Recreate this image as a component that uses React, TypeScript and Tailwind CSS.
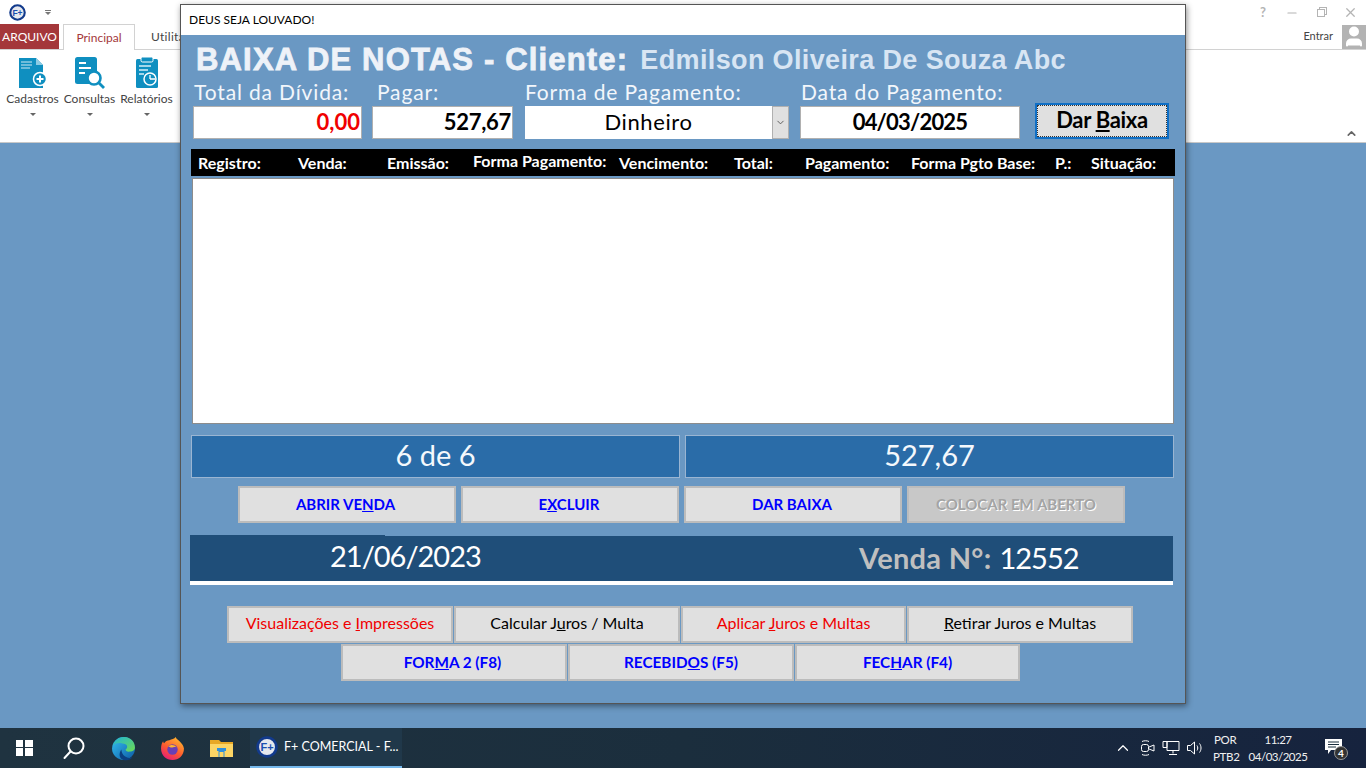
import { ChevronDown, ChevronUp, Minus, X, User } from "lucide-react";
import type { ReactNode } from "react";

const FONT = "font-['Lato','Noto_Sans',sans-serif]";

function FpLogo({ size = 20 }: { size?: number }) {
  return (
    <svg width={size} height={size} viewBox="0 0 24 24">
      <circle cx="12" cy="12" r="10.2" fill="#e6e8ee" stroke="#123a8c" strokeWidth="3" />
      <text x="12" y="16.5" textAnchor="middle" fontSize="12" fontWeight="700" fontFamily="Liberation Sans" fill="#1c4fb0">
        F+
      </text>
    </svg>
  );
}

function CadastrosIcon() {
  return (
    <svg width="30" height="34" viewBox="0 0 30 34">
      <path d="M1 2h17l7 7v23H1z" fill="#0f8fc0" />
      <path d="M18 2l7 7h-7z" fill="#8ccbe3" />
      <path d="M3 6h11M3 9h11M3 12h9" stroke="#cfe9f4" strokeWidth="1.2" />
      <circle cx="22" cy="23" r="6.5" fill="#0f8fc0" stroke="#fff" strokeWidth="1.5" />
      <path d="M22 19.5v7M18.5 23h7" stroke="#fff" strokeWidth="2" />
    </svg>
  );
}

function ConsultasIcon() {
  return (
    <svg width="32" height="33" viewBox="0 0 32 33">
      <rect x="1" y="1" width="22" height="27" rx="2.5" fill="#0f8fc0" />
      <path d="M5 7h7M5 12h12M5 17h6" stroke="#fff" strokeWidth="2" />
      <circle cx="20" cy="22" r="6.5" fill="#fff" stroke="#0f8fc0" strokeWidth="2.6" />
      <path d="M25 27l5 5" stroke="#0f8fc0" strokeWidth="2.8" />
    </svg>
  );
}

function RelatoriosIcon() {
  return (
    <svg width="24" height="33" viewBox="0 0 24 33">
      <rect x="1" y="3" width="22" height="29" rx="1.5" fill="#0f8fc0" />
      <rect x="6" y="1" width="12" height="5" rx="1.5" fill="#0f8fc0" stroke="#fff" strokeWidth="1" />
      <path d="M4 10h12M4 14h9M4 18h5" stroke="#d8eff8" strokeWidth="1.3" />
      <circle cx="15" cy="23" r="6" fill="#0f8fc0" stroke="#fff" strokeWidth="1.5" />
      <path d="M15 23v-4M15 23h5" stroke="#fff" strokeWidth="1.3" />
    </svg>
  );
}

function RibbonButton({ icon, label }: { icon: ReactNode; label: string }) {
  return (
    <div className="flex w-[57px] flex-col items-center">
      <div className="flex h-[35px] items-center justify-center">{icon}</div>
      <span className="mt-[1px] whitespace-nowrap text-[12px] leading-[16px] text-[#444]">{label}</span>
      <span className="mt-[6px] h-0 w-0 border-x-[3px] border-t-[3px] border-x-transparent border-t-[#666]" />
    </div>
  );
}

function Ribbon() {
  return (
    <div className="h-[143px] shrink-0 border-b border-[#c8c8c8] bg-white">
      <div className="flex h-[25px] items-center justify-between">
        <div className="flex items-center gap-[19px] pl-[9px]">
          <FpLogo size={17} />
          <div className="flex flex-col items-center gap-[1px]">
            <span className="h-px w-[6px] bg-[#777]" />
            <span className="h-0 w-0 border-x-[3px] border-t-[3px] border-x-transparent border-t-[#777]" />
          </div>
        </div>
        <div className="flex items-center gap-[15px] pr-[8px] text-[#b4b4b4]">
          <span className="w-[14px] text-center text-[13px] font-bold">?</span>
          <Minus size={14} />
          <div className="flex w-[14px] justify-center">
            <span className="h-[8px] w-[8px] border border-[#b4b4b4] bg-white shadow-[2px_-2px_0_-1px_#fff,2px_-2px_0_0_#b4b4b4]" />
          </div>
          <X size={15} />
        </div>
      </div>
      <div className="flex h-[25px] items-end border-b border-[#d2d2d2]">
        <div className="flex h-[25px] w-[59px] items-center justify-center bg-[#a4373a] text-[12px] text-white">ARQUIVO</div>
        <div className="-mb-px ml-[4px] flex h-[26px] w-[72px] items-center justify-center border-x border-t border-[#d2d2d2] bg-white text-[12px] text-[#a4373a]">
          Principal
        </div>
        <span className="ml-[16px] self-center text-[12px] tracking-[0.3px] text-[#444]">Utilitários</span>
        <div className="ml-auto flex h-[25px] items-center gap-[9px]">
          <span className="text-[11px] text-[#444]">Entrar</span>
          <div className="flex h-[24px] w-[24px] items-end justify-center overflow-hidden bg-[#b3b3b3]">
            <User size={25} className="fill-white text-white" />
          </div>
        </div>
      </div>
      <div className="relative flex h-[92px] items-start pl-[4px] pt-[5px]">
        <RibbonButton icon={<CadastrosIcon />} label="Cadastros" />
        <RibbonButton icon={<ConsultasIcon />} label="Consultas" />
        <RibbonButton icon={<RelatoriosIcon />} label="Relatórios" />
        <ChevronUp size={13} strokeWidth={3} className="absolute bottom-[2px] right-[8px] text-[#666]" />
      </div>
    </div>
  );
}

function FieldLabel({ width, children }: { width: string; children: ReactNode }) {
  return <div className={`${width} text-[21px] leading-[24px] tracking-[0.85px] text-[#f2f6fb]`}>{children}</div>;
}

function ActionButton({ className, children }: { className: string; children: ReactNode }) {
  return (
    <div className={`flex h-[37px] items-center justify-center border-2 border-[#bcbcbc] bg-[#e0e0e0] ${className}`}>
      {children}
    </div>
  );
}

const columns: [string, string][] = [
  ["Registro:", "w-[100px]"],
  ["Venda:", "w-[89px]"],
  ["Emissão:", "w-[86px]"],
  ["Forma Pagamento:", "w-[146px] -mt-[3px]"],
  ["Vencimento:", "w-[115px]"],
  ["Total:", "w-[71px]"],
  ["Pagamento:", "w-[106px]"],
  ["Forma Pgto Base:", "w-[144px]"],
  ["P.:", "w-[36px]"],
  ["Situação:", "w-[70px]"],
];

function PaymentWindow() {
  return (
    <div className="absolute left-[180px] top-[4px] flex h-[700px] w-[1006px] flex-col border border-[#555] bg-[#6a98c3] shadow-[1px_2px_6px_rgba(0,0,0,0.45)]">
      <div className="flex h-[30px] shrink-0 items-center bg-white pl-[8px] text-[12px] text-black">DEUS SEJA LOUVADO!</div>

      {/* titulo */}
      <div className="mt-[8px] flex h-[34px] items-center pl-[15px] font-['Liberation_Sans',sans-serif] font-bold">
        <span className="whitespace-nowrap text-[31px] leading-[34px] tracking-[1.17px] text-[#eef2f8] [-webkit-text-stroke:0.8px_#eef2f8]">
          BAIXA DE NOTAS - Cliente:
        </span>
        <span className="ml-[12px] whitespace-nowrap text-[27px] leading-[34px] tracking-[0.37px] text-[#d8e5f3]">Edmilson Oliveira De Souza Abc</span>
      </div>

      {/* campos */}
      <div className="mt-[3px] flex h-[24px] pl-[13px]">
        <FieldLabel width="w-[183px]">Total da Dívida:</FieldLabel>
        <FieldLabel width="w-[148px]">Pagar:</FieldLabel>
        <FieldLabel width="w-[276px]">Forma de Pagamento:</FieldLabel>
        <FieldLabel width="w-[230px]">Data do Pagamento:</FieldLabel>
      </div>
      <div className="flex h-[35px] items-end pl-[12px] text-[22px]">
        <div className="flex h-[33px] w-[169px] items-center justify-end border border-[#b0b0b0] bg-white pb-[2px] pr-[1px] font-bold text-[#f00000]">0,00</div>
        <div className="ml-[10px] flex h-[33px] w-[141px] items-center justify-end border border-[#b0b0b0] bg-white pb-[2px] pr-[1px] font-bold tracking-[-0.3px] text-black">527,67</div>
        <div className="ml-[12px] flex h-[33px] w-[264px] items-center bg-white">
          <span className="mb-[2px] flex-1 text-center tracking-[0.6px] text-black">Dinheiro</span>
          <div className="flex h-full w-[17px] items-center justify-center border border-[#b0b0b0] bg-[#e0e0e0]">
            <ChevronDown size={11} className="text-[#555]" />
          </div>
        </div>
        <div className="ml-[11px] flex h-[33px] w-[220px] items-center justify-center border border-[#b0b0b0] bg-white pb-[2px] font-bold tracking-[-0.8px] text-black">04/03/2025</div>
        <div className="ml-[15px] flex h-[36px] w-[134px] items-center justify-center border-2 border-[#0f6fc6] bg-[#e0e0e0] pb-[3px] font-bold tracking-[-0.3px] text-black outline-1 -outline-offset-3 outline-dotted outline-[#333]">
          <span>
            Dar <u>B</u>aixa
          </span>
        </div>
      </div>

      {/* cabecalho da lista */}
      <div className="ml-[10px] mt-[10px] flex h-[27px] w-[984px] items-center bg-black pl-[7px] text-[16px] font-bold leading-none text-white">
        {columns.map(([label, width]) => (
          <span key={label} className={`${width} shrink-0 whitespace-nowrap`}>
            {label}
          </span>
        ))}
      </div>
      <div className="ml-[11px] mt-[2px] h-[246px] w-[982px] border border-[#8c8c8c] bg-white" />

      {/* totais */}
      <div className="ml-[10px] mt-[11px] flex w-[983px] gap-[5px] text-[29px] text-[#f4f8fc]">
        <div className="flex h-[43px] flex-1 items-center justify-center border border-[#9ab5d2] bg-[#2a6ca8] pb-[3px]">6 de 6</div>
        <div className="flex h-[43px] flex-1 items-center justify-center border border-[#9ab5d2] bg-[#2a6ca8] pb-[3px]">527,67</div>
      </div>

      {/* acoes */}
      <div className="ml-[57px] mt-[8px] flex gap-[5px] text-[15px] font-bold text-[#0000ff]">
        <ActionButton className="w-[218px] pb-[1px] pr-[3px]">
          <span>
            ABRIR VE<u>N</u>DA
          </span>
        </ActionButton>
        <ActionButton className="w-[218px] pb-[1px] pr-[2px]">
          <span>
            E<u>X</u>CLUIR
          </span>
        </ActionButton>
        <ActionButton className="w-[218px] pb-[1px] pr-[2px]">DAR BAIXA</ActionButton>
        <div className="flex h-[37px] w-[218px] items-center justify-center border-2 border-[#bcbcbc] bg-[#c8c8c8] pb-[1px] text-[#a4a4a4] [text-shadow:1px_1px_0_#fff]">
          COLOCAR EM ABERTO
        </div>
      </div>

      {/* data e venda */}
      <div className="relative ml-[9px] mt-[13px] flex h-[49px] w-[983px] items-center border-b-4 border-white bg-[#1f4e79] pl-[140px] text-[29px] text-white">
        <span className="absolute -top-px left-0 h-px w-[195px] bg-[#1f4e79]" />
        <span className="mb-[6px] w-[529px] tracking-[-1px]">21/06/2023</span>
        <span className="mb-[2px] font-bold tracking-[0.3px] text-[#bfbfbf]">Venda N°:</span>
        <span className="mb-[2px] ml-[8px] tracking-[-1px]">12552</span>
      </div>

      {/* botoes de baixo */}
      <div className="ml-[46px] mt-[21px] flex gap-px text-[16px]">
        <ActionButton className="w-[226px] pb-[3px] text-[#f00000]">
          <span>
            Visualizações e <u>I</u>mpressões
          </span>
        </ActionButton>
        <ActionButton className="w-[226px] pb-[3px] text-black">
          <span>
            Calcular J<u>u</u>ros / Multa
          </span>
        </ActionButton>
        <ActionButton className="w-[225px] pb-[3px] text-[#f00000]">
          <span>
            Aplicar <u>J</u>uros e Multas
          </span>
        </ActionButton>
        <ActionButton className="w-[226px] pb-[3px] text-black">
          <span>
            <u>R</u>etirar Juros e Multas
          </span>
        </ActionButton>
      </div>
      <div className="ml-[160px] mt-px flex gap-px text-[15.3px] font-bold text-[#0000ff]">
        <ActionButton className="w-[226px] pr-[3px]">
          <span>
            FOR<u>M</u>A 2 (F8)
          </span>
        </ActionButton>
        <ActionButton className="w-[226px]">
          <span>
            RECEBID<u>O</u>S (F5)
          </span>
        </ActionButton>
        <ActionButton className="w-[225px]">
          <span>
            FEC<u>H</u>AR (F4)
          </span>
        </ActionButton>
      </div>
    </div>
  );
}

function EdgeIcon() {
  return (
    <svg width="25" height="25" viewBox="0 0 24 24">
      <defs>
        <linearGradient id="edgeA" x1="0" y1="0" x2="1" y2="1">
          <stop offset="0" stopColor="#35c1f1" />
          <stop offset="1" stopColor="#0c59a4" />
        </linearGradient>
        <linearGradient id="edgeB" x1="0" y1="0" x2="1" y2="1">
          <stop offset="0" stopColor="#1fb5d8" />
          <stop offset="1" stopColor="#6fdc4f" />
        </linearGradient>
      </defs>
      <circle cx="12" cy="12" r="11" fill="url(#edgeA)" />
      <path d="M2 9C4 2 10 1 13 1c6 0 10 5 10 10 0 3-3 4-6 4-2 0-3-1-3-2 2-1 2-4 0-5C10 6 4 6 2 9z" fill="url(#edgeB)" />
      <path d="M10 13c0 4 3 8 8 8 1 0 2-.3 3-1-2 3-6 4-9 3-4-1-5-6-2-10z" fill="#0b3f80" />
    </svg>
  );
}

function FirefoxIcon() {
  return (
    <svg width="25" height="25" viewBox="0 0 24 24">
      <defs>
        <linearGradient id="ffA" x1="0.8" y1="0" x2="0.2" y2="1">
          <stop offset="0" stopColor="#ffbd2e" />
          <stop offset="0.55" stopColor="#ff5b2e" />
          <stop offset="1" stopColor="#e4197c" />
        </linearGradient>
      </defs>
      <path d="M15 1c1 3 7 5 8 11 0 7-5 11-11 11S1 19 1 12c0-3 1-6 2-7 0 1 1 2 1 2 1-2 3-3 5-3 2-1 5-1 6-3z" fill="url(#ffA)" />
      <circle cx="12" cy="13" r="5" fill="#6a3fb5" />
      <path d="M8 10c2-2 6-2 8 1-2-1-3 0-5 0-1 0-2-1-3-1z" fill="#ffb52e" />
    </svg>
  );
}

function FolderIcon() {
  return (
    <svg width="23" height="19" viewBox="0 0 23 19">
      <path d="M0 1h9l2 2h12v15H0z" fill="#e8a825" />
      <path d="M0 5h23v13H0z" fill="#fcd565" />
      <path d="M7 9h9v3h-1.500v6h-6v-6H7z" fill="#2f8fdc" />
      <rect x="9.500" y="13" width="4" height="5" fill="#fcd565" />
    </svg>
  );
}

function Taskbar() {
  return (
    <div className="flex h-[40px] shrink-0 items-center bg-gradient-to-r from-[#1f3340] via-[#1b2e3d] to-[#16233e] text-white">
      <div className="flex h-full w-[49px] items-center justify-center">
        <div className="grid grid-cols-2 gap-[1px]">
          <span className="h-[7px] w-[7px] bg-white" />
          <span className="h-[7px] w-[8px] bg-white" />
          <span className="h-[8px] w-[7px] bg-white" />
          <span className="h-[8px] w-[8px] bg-white" />
        </div>
      </div>
      <div className="flex h-full w-[49px] items-center justify-center">
        <svg width="24" height="24" viewBox="0 0 24 24" fill="none" stroke="white" strokeWidth="2">
          <circle cx="14" cy="10" r="7.5" />
          <path d="M8.500 15.500 2.500 22" strokeLinecap="round" />
        </svg>
      </div>
      <div className="flex h-full w-[50px] items-center justify-center">
        <EdgeIcon />
      </div>
      <div className="flex h-full w-[49px] items-center justify-center">
        <FirefoxIcon />
      </div>
      <div className="flex h-full w-[49px] items-center justify-center">
        <FolderIcon />
      </div>
      <div className="ml-[4px] flex h-full w-[152px] items-center gap-[6px] border-b-2 border-[#76b9ed] bg-[#20384a] pl-[6px] text-[12.5px]">
        <FpLogo size={22} />
        <span className="whitespace-nowrap">F+ COMERCIAL - F...</span>
      </div>
      <div className="ml-auto flex h-full items-center pr-[18px]">
        <ChevronUp size={18} strokeWidth={1.6} />
        <svg width="16" height="18" viewBox="0 0 16 18" fill="none" stroke="white" strokeWidth="1" className="ml-[8px]">
          <rect x="1.500" y="5.500" width="7" height="7" rx="2" />
          <path d="M9 8l5-2v6l-5-2M2 2.500c2-1 5-1 7 0M2 15.500c2 1 5 1 7 0" />
        </svg>
        <svg width="18" height="16" viewBox="0 0 18 16" fill="none" stroke="white" strokeWidth="1" className="ml-[6px]">
          <path d="M5 1.500h12v9H5zM1 1.500h4v6H1zM11 10.500v3M7 14.500h8" />
        </svg>
        <svg width="18" height="16" viewBox="0 0 18 16" fill="none" stroke="white" strokeWidth="1" className="ml-[6px]">
          <path d="M1.500 5.500h3l4-3.500v12l-4-3.500h-3zM11 5.500c1 1.500 1 3.500 0 5M13.500 3.500c2 2.500 2 6.500 0 9" />
        </svg>
        <div className="ml-[9px] flex w-[27px] flex-col items-start text-[11.5px] leading-[17px] tracking-[-0.3px] text-[#f0f0f0]">
          <span className="pl-[1px]">POR</span>
          <span>PTB2</span>
        </div>
        <div className="ml-[8px] flex w-[60px] flex-col items-center text-[11.5px] leading-[17px] tracking-[-0.5px] text-[#f0f0f0]">
          <span>11:27</span>
          <span>04/03/2025</span>
        </div>
        <div className="relative ml-[16px] h-[24px] w-[24px]">
          <svg width="17" height="17" viewBox="0 0 17 17" className="absolute left-[1px] top-[2px]">
            <path d="M0 1h17v11H6l-3 4v-4H0z" fill="white" />
            <path d="M3 4h11M3 6.500h11M3 9h8" stroke="#1b2e3d" strokeWidth="1" />
          </svg>
          <span className="absolute bottom-0 right-0 flex h-[14px] w-[14px] items-center justify-center rounded-full border border-[#999] bg-[#333] text-[10px] font-bold leading-none">
            4
          </span>
        </div>
      </div>
    </div>
  );
}

export default function App() {
  return (
    <div className={`relative flex h-[768px] w-[1366px] flex-col overflow-hidden bg-[#6a98c3] ${FONT}`}>
      <Ribbon />
      <div className="flex-1" />
      <Taskbar />
      <PaymentWindow />
    </div>
  );
}
